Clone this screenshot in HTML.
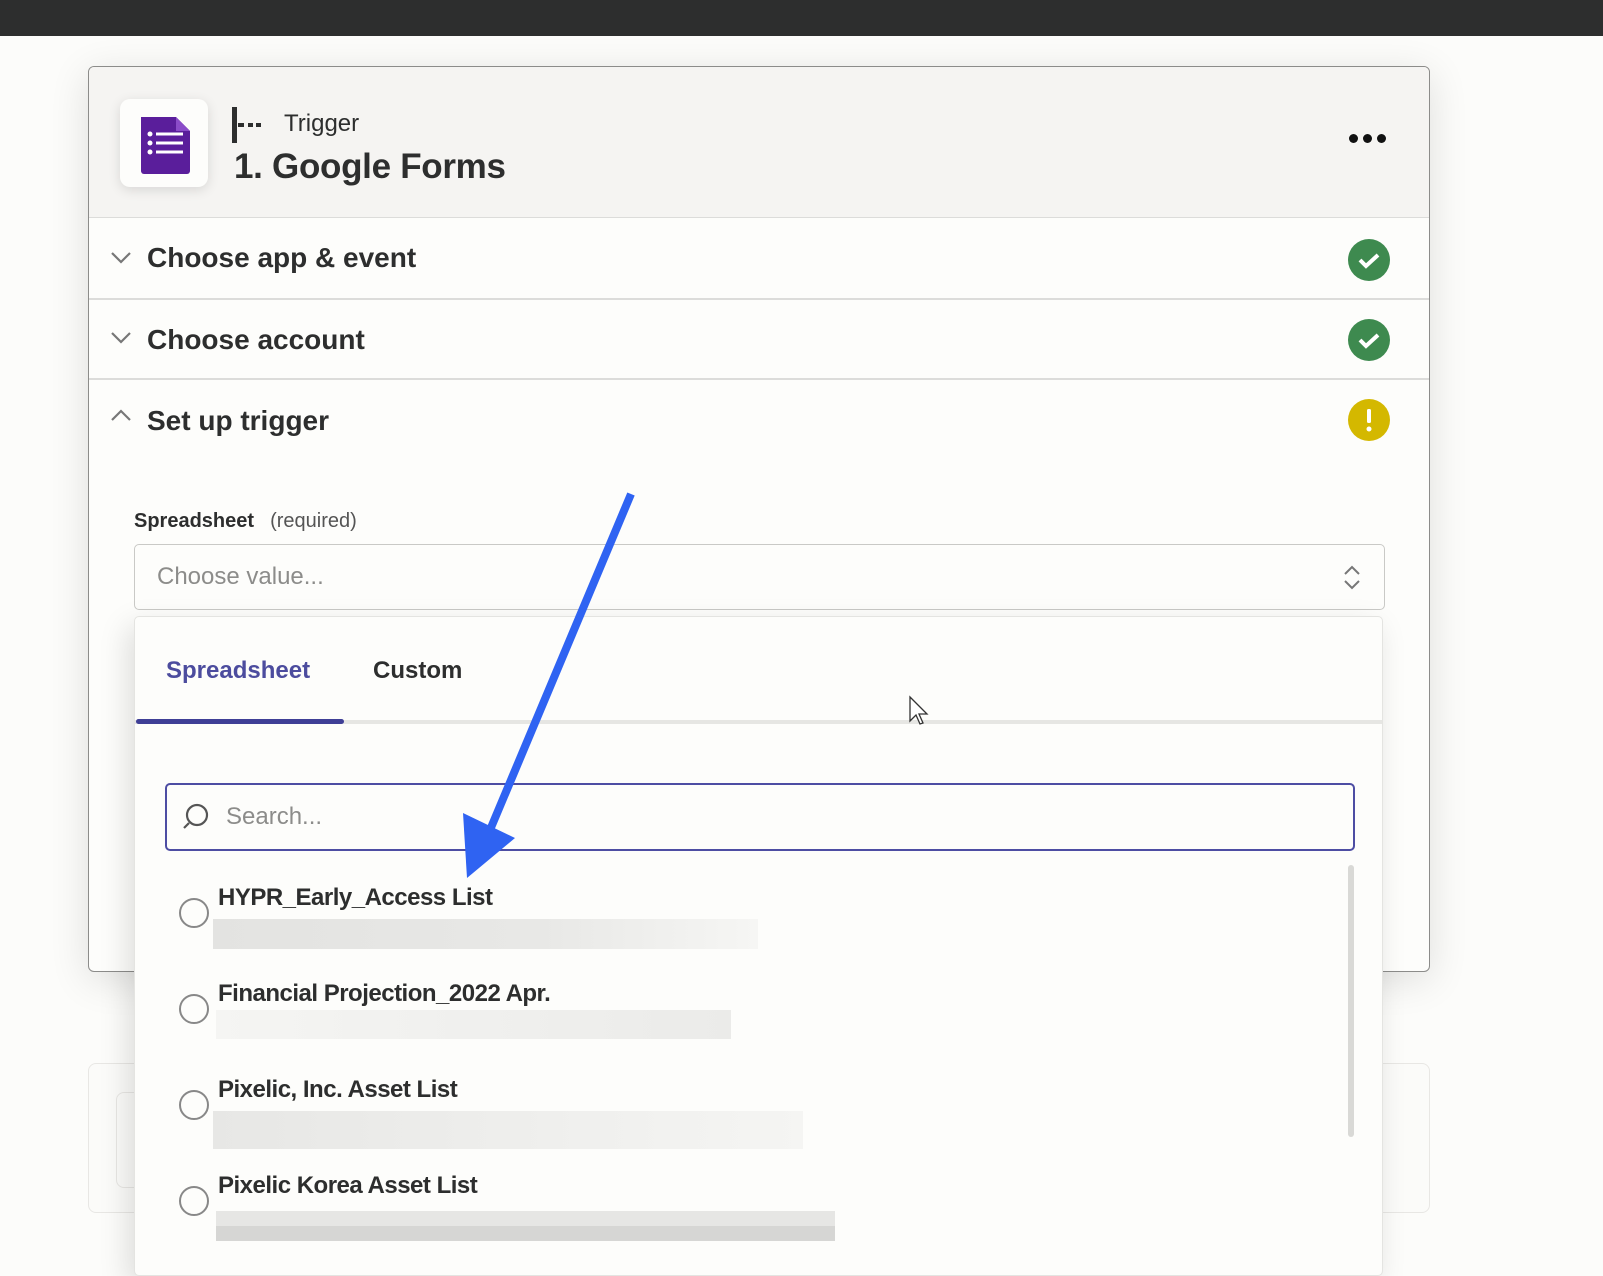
<!DOCTYPE html>
<html><head><meta charset="utf-8"><style>
*{box-sizing:border-box;margin:0;padding:0}
body{width:1603px;height:1261px;overflow:hidden;background:#fcfcfa;font-family:"Liberation Sans",sans-serif;color:#2d2e2e;position:relative}
.a{position:absolute}
</style></head><body>
<div class="a" style="left:0;top:0;width:1603px;height:36px;background:#2d2e2e"></div>
<div class="a" style="left:88px;top:1063px;width:1342px;height:150px;border:1px solid #e8e7e4;border-radius:8px;background:#fbfbf9"></div>
<div class="a" style="left:116px;top:1092px;width:40px;height:96px;border:1px solid #e8e7e4;border-radius:8px"></div>
<div class="a" style="left:88px;top:66px;width:1342px;height:906px;border:1.5px solid #8c8c8a;border-radius:6px;background:#fdfdfb;box-shadow:0 8px 40px rgba(0,0,0,0.12);overflow:hidden">
  <div class="a" style="left:0;top:0;width:100%;height:151px;background:#f5f4f2;border-bottom:1.5px solid #dcdcda"></div>
  <div class="a" style="left:31px;top:32px;width:88px;height:88px;background:#fdfdfb;border-radius:10px;box-shadow:0 3px 12px rgba(0,0,0,0.12)">
    <svg width="88" height="88" viewBox="0 0 88 88" style="position:absolute;left:0;top:0">
      <path d="M21 18h35l14 14v40a3 3 0 0 1-3 3H24a3 3 0 0 1-3-3z" fill="#5a1e9b"/>
      <path d="M56 18v14h14z" fill="#8a4cc8"/>
      <circle cx="30" cy="35" r="2.5" fill="#fff"/><circle cx="30" cy="44" r="2.5" fill="#fff"/><circle cx="30" cy="53" r="2.5" fill="#fff"/>
      <rect x="36" y="33.5" width="27" height="3" fill="#fff"/><rect x="36" y="42.5" width="27" height="3" fill="#fff"/><rect x="36" y="51.5" width="27" height="3" fill="#fff"/>
    </svg>
  </div>
  <div class="a" style="left:143px;top:40px;width:5px;height:36px;background:#2d2e2e"></div>
  <div class="a" style="left:149px;top:56px;width:6px;height:4px;background:#2d2e2e"></div>
  <div class="a" style="left:159px;top:56px;width:5px;height:4px;background:#2d2e2e"></div>
  <div class="a" style="left:167px;top:56px;width:5px;height:4px;background:#2d2e2e"></div>
  <div class="a" style="left:195px;top:43px;font-size:24px">Trigger</div>
  <div class="a" style="left:145px;top:80px;font-size:35px;font-weight:bold;letter-spacing:-0.3px">1. Google Forms</div>
  <div class="a" style="left:1260px;top:67px;display:flex;gap:5px"><span style="width:9px;height:9px;border-radius:50%;background:#111"></span><span style="width:9px;height:9px;border-radius:50%;background:#111"></span><span style="width:9px;height:9px;border-radius:50%;background:#111"></span></div>
  <div class="a" style="left:0;top:231px;width:100%;height:1.5px;background:#dcdcda"></div>
  <div class="a" style="left:0;top:311px;width:100%;height:1.5px;background:#dcdcda"></div>
  <svg class="a" style="left:20px;top:182px" width="26" height="16"><path d="M3 4l9 9 9-9" stroke="#777" stroke-width="2.2" fill="none"/></svg>
  <svg class="a" style="left:20px;top:262px" width="26" height="16"><path d="M3 4l9 9 9-9" stroke="#777" stroke-width="2.2" fill="none"/></svg>
  <svg class="a" style="left:20px;top:340px" width="26" height="16"><path d="M3 13l9-9 9 9" stroke="#777" stroke-width="2.2" fill="none"/></svg>
  <div class="a" style="left:58px;top:175px;font-size:28px;font-weight:bold">Choose app &amp; event</div>
  <div class="a" style="left:58px;top:257px;font-size:28px;font-weight:bold">Choose account</div>
  <div class="a" style="left:58px;top:338px;font-size:28px;font-weight:bold">Set up trigger</div>
  <svg class="a" style="left:1258px;top:171px" width="44" height="44"><circle cx="22" cy="22" r="21" fill="#3e8a4f"/><path d="M13 22l6 6 12-11" stroke="#fff" stroke-width="4" fill="none"/></svg>
  <svg class="a" style="left:1258px;top:251px" width="44" height="44"><circle cx="22" cy="22" r="21" fill="#3e8a4f"/><path d="M13 22l6 6 12-11" stroke="#fff" stroke-width="4" fill="none"/></svg>
  <svg class="a" style="left:1258px;top:331px" width="44" height="44"><circle cx="22" cy="22" r="21" fill="#d4b800"/><rect x="20" y="11" width="4" height="14" rx="1.5" fill="#fff"/><circle cx="22" cy="31" r="2.5" fill="#fff"/></svg>
  <div class="a" style="left:45px;top:443px;font-size:20px"><b>Spreadsheet</b><span style="margin-left:16px;color:#555">(required)</span></div>
  <div class="a" style="left:45px;top:477px;width:1251px;height:66px;border:1.5px solid #c9c9c6;border-radius:5px;background:#fdfdfb"></div>
  <div class="a" style="left:68px;top:496px;font-size:24px;color:#8c8c8a">Choose value...</div>
  <svg class="a" style="left:1252px;top:496px" width="22" height="30"><path d="M4 11l7-7 7 7M4 18l7 7 7-7" stroke="#777" stroke-width="2" fill="none"/></svg>
  <div class="a" style="left:1262px;top:680px;font-size:20px;color:#555">e</div>
</div>
<div class="a" style="left:134px;top:616px;width:1249px;height:660px;background:#fdfdfb;border:1.5px solid #e4e4e1;border-radius:5px;box-shadow:-6px 10px 30px rgba(0,0,0,0.13)">
  <div class="a" style="left:31px;top:40px;font-size:24px;font-weight:bold;color:#4c4c9e">Spreadsheet</div>
  <div class="a" style="left:238px;top:40px;font-size:24px;font-weight:bold;color:#2d2e2e">Custom</div>
  <div class="a" style="left:0;top:103px;width:1247px;height:4px;background:#e6e6e3"></div>
  <div class="a" style="left:1px;top:102px;width:208px;height:5px;background:#3f3f96;border-radius:3px"></div>
  <div class="a" style="left:30px;top:166px;width:1190px;height:68px;border:2.5px solid #4d4da3;border-radius:5px"></div>
  <svg class="a" style="left:44px;top:184px" width="32" height="32"><circle cx="18" cy="14" r="10" stroke="#555" stroke-width="2.2" fill="none"/><path d="M10 22l-5 5" stroke="#555" stroke-width="2.2"/></svg>
  <div class="a" style="left:91px;top:186px;font-size:24px;color:#8c8c8a">Search...</div>
  <div class="a" style="left:1213px;top:248px;width:6px;height:272px;background:#d9d9d6;border-radius:3px"></div>
  <div class="a" style="left:44px;top:281px;width:30px;height:30px;border:2.5px solid #888;border-radius:50%"></div>
  <div class="a" style="left:83px;top:267px;font-size:24px;font-weight:bold;letter-spacing:-0.5px">HYPR_Early_Access List</div>
  <div class="a" style="left:78px;top:302px;width:545px;height:30px;background:linear-gradient(90deg,#e3e3e1,#e8e8e6 60%,#f6f6f4)"></div>
  <div class="a" style="left:44px;top:377px;width:30px;height:30px;border:2.5px solid #888;border-radius:50%"></div>
  <div class="a" style="left:83px;top:363px;font-size:24px;font-weight:bold;letter-spacing:-0.5px">Financial Projection_2022 Apr.</div>
  <div class="a" style="left:81px;top:393px;width:515px;height:29px;background:linear-gradient(90deg,#f5f5f3,#f0f0ee 50%,#ebebe9)"></div>
  <div class="a" style="left:44px;top:473px;width:30px;height:30px;border:2.5px solid #888;border-radius:50%"></div>
  <div class="a" style="left:83px;top:459px;font-size:24px;font-weight:bold;letter-spacing:-0.5px">Pixelic, Inc. Asset List</div>
  <div class="a" style="left:78px;top:494px;width:590px;height:38px;background:linear-gradient(90deg,#e7e7e5,#eeeeec 50%,#f5f5f3)"></div>
  <div class="a" style="left:44px;top:569px;width:30px;height:30px;border:2.5px solid #888;border-radius:50%"></div>
  <div class="a" style="left:83px;top:555px;font-size:24px;font-weight:bold;letter-spacing:-0.5px">Pixelic Korea Asset List</div>
  <div class="a" style="left:81px;top:594px;width:619px;height:30px;background:linear-gradient(180deg,#e6e6e4 50%,#d6d6d4 50%)"></div>
</div>
<svg class="a" style="left:0;top:0" width="1603" height="1261">
  <line x1="631" y1="494" x2="490" y2="830" stroke="#2f63f2" stroke-width="8"/>
  <polygon points="463,813 515,838 467,878" fill="#2f63f2"/>
  <path d="M910 697v24l6-6 4 9 3-1-4-9h8z" fill="#fff" stroke="#333" stroke-width="1.3"/>
</svg>
</body></html>
